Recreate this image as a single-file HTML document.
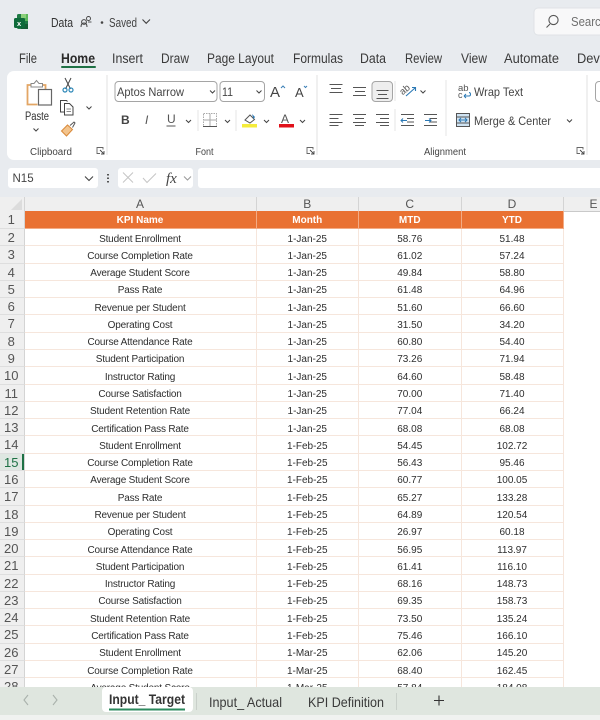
<!DOCTYPE html>
<html><head><meta charset="utf-8"><style>
html,body{margin:0;padding:0;width:600px;height:720px;overflow:hidden;background:#e8ebef;font-family:"Liberation Sans",sans-serif}
body{filter:blur(.3px)}
svg{position:absolute;left:0;top:0}
svg text{font-family:"Liberation Sans",sans-serif}
#grid{position:absolute;left:0;top:197px;width:600px;height:490px;background:#fff;overflow:hidden}
#head{position:absolute;left:0;top:0;width:600px;height:14px;background:#efefef;border-bottom:1px solid #c9c9c9}
#head div{position:absolute;top:0;height:14px;line-height:15px;font-size:12px;color:#555;text-align:center;border-right:1px solid #d4d4d4;box-sizing:content-box}
#rows{position:absolute;left:0;top:14px;width:564px}
.r{display:flex;height:17.29px;font-size:10px;color:#2e2e2e;line-height:17.5px;text-align:center}
.r>div{box-sizing:border-box;padding-top:1.5px;border-right:1px solid #f6e6dc;border-bottom:1px solid #f6e6dc;white-space:nowrap;overflow:hidden}
.r>div:nth-child(1){width:24.5px;background:#efefef;color:#555;font-size:13px;border-right:1px solid #d4d4d4;border-bottom:1px solid #dedede;padding-right:1px;padding-top:0}
.r>div:nth-child(2){width:232px;letter-spacing:-.18px}
.r>div:nth-child(3){width:102.5px}
.r>div:nth-child(4){width:102.5px}
.r>div:nth-child(5){width:102px}
.h>div:not(:first-child){background:#e97132;color:#fff;font-weight:bold;border-color:#f3ab84;letter-spacing:0;padding-top:1px}
.h{height:18px}
.s>div:nth-child(1){background:#dfe7e2;box-shadow:inset -2px 0 0 #1e7145;color:#1e7145}
</style></head><body>
<svg width="600" height="197" viewBox="0 0 600 197" fill="none" font-size="12">
<!-- excel logo -->
<rect x="17" y="14" width="11" height="15" rx="1.5" fill="#1f7a45"/>
<rect x="21" y="14" width="7" height="7" fill="#5cb85c"/>
<rect x="21" y="14" width="5" height="4" fill="#8bd07a"/>
<rect x="21" y="24" width="7" height="5" fill="#155c34"/>
<rect x="14" y="18" width="11" height="10" rx="1.5" fill="#0e6a3a"/>
<text x="17" y="26" font-size="7.5" font-weight="bold" fill="#fff">x</text>
<text x="51" y="27" font-size="12.500" fill="#333" textLength="22" lengthAdjust="spacingAndGlyphs">Data</text>
<circle cx="84" cy="22" r="2.4" stroke="#444"/><path d="M81 27c0-3 1-4 3-4s3 1 3 4" stroke="#444"/>
<circle cx="88.5" cy="18.5" r="2" stroke="#444" stroke-width=".9"/><path d="M88 22h3.5" stroke="#444" stroke-width=".9"/>
<circle cx="102" cy="22.500" r="1.300" fill="#444"/>
<text x="109" y="27" font-size="12.500" fill="#444" textLength="28" lengthAdjust="spacingAndGlyphs">Saved</text>
<path d="M142.500 19.500l3.700 3.800 3.800-3.800" stroke="#444" stroke-width="1.100"/>
<!-- search -->
<rect x="534" y="8" width="80" height="27" rx="4" fill="#f8f8f9" stroke="#dfe2e6"/>
<circle cx="553.500" cy="20" r="4.600" stroke="#555" stroke-width="1.100"/><path d="M550 24l-3.500 3.500" stroke="#555" stroke-width="1.100"/>
<text x="571" y="26" font-size="12.500" fill="#6f6f6f" textLength="36" lengthAdjust="spacingAndGlyphs">Search</text>
<!-- tabs -->
<g font-size="13.500" fill="#3a3a3a">
<text x="19" y="63" textLength="18" lengthAdjust="spacingAndGlyphs">File</text>
<text x="61" y="63" font-weight="bold" fill="#2a2a2a" textLength="34" lengthAdjust="spacingAndGlyphs">Home</text>
<text x="112" y="63" textLength="31" lengthAdjust="spacingAndGlyphs">Insert</text>
<text x="161" y="63" textLength="28" lengthAdjust="spacingAndGlyphs">Draw</text>
<text x="207" y="63" textLength="67" lengthAdjust="spacingAndGlyphs">Page Layout</text>
<text x="293" y="63" textLength="50" lengthAdjust="spacingAndGlyphs">Formulas</text>
<text x="360" y="63" textLength="26" lengthAdjust="spacingAndGlyphs">Data</text>
<text x="405" y="63" textLength="37" lengthAdjust="spacingAndGlyphs">Review</text>
<text x="461" y="63" textLength="26" lengthAdjust="spacingAndGlyphs">View</text>
<text x="504" y="63" textLength="55" lengthAdjust="spacingAndGlyphs">Automate</text>
<text x="577" y="63" textLength="30" lengthAdjust="spacingAndGlyphs">Deve</text>
</g>
<rect x="61" y="66" width="35" height="2" rx="1" fill="#1e7145"/>
<!-- ribbon -->
<rect x="7" y="71" width="620" height="89" rx="7" fill="#fff"/>
<path d="M107 75v80M317 75v80M587 75v80" stroke="#e1e1e1"/>
<!-- paste -->
<path d="M32 85h-4.500v19.500h10" stroke="#e3a665" stroke-width="1.800"/><path d="M41 85h4.500v4" stroke="#e3a665" stroke-width="1.800"/>
<path d="M31 83.500h3l2.500-3 2.500 3h3.500v3.500h-11.500z" stroke="#888" fill="#fff"/>
<rect x="38.500" y="89.500" width="13" height="15.500" fill="#fff" stroke="#666" stroke-width="1.200"/>
<text x="25" y="120" font-size="11.500" fill="#333" textLength="24" lengthAdjust="spacingAndGlyphs">Paste</text>
<path d="M33.500 128.500l2.500 2.500 2.500-2.500" stroke="#444"/>
<!-- scissors -->
<path d="M65 78l5.500 11M71 78l-5.500 11" stroke="#444"/><circle cx="65" cy="90" r="2" stroke="#2e88b8" stroke-width="1.200"/><circle cx="71" cy="90" r="2" stroke="#2e88b8" stroke-width="1.200"/>
<!-- copy -->
<path d="M64 112h-3.500v-11.500h6l1 1" stroke="#444"/><path d="M64.500 103.500h5l3.500 3.500v8h-8.500z" stroke="#444" fill="#fff"/><path d="M66.500 109h4.500M66.500 111.500h4.500" stroke="#666" stroke-width=".8"/>
<path d="M86.500 106.500l2.500 2.500 2.500-2.500" stroke="#444"/>
<!-- brush -->
<path d="M61.500 131l6-6 5 4.500-6 6.500z" fill="#f3c48d" stroke="#d98a3a"/><path d="M70 125.500l4-3.500 1 1-2.500 4.500" stroke="#555" fill="#fff"/>
<text x="30" y="155" font-size="10" fill="#444" textLength="42" lengthAdjust="spacingAndGlyphs">Clipboard</text>
<path d="M97 148.500v-1h6v2M97 147.500v6h3" stroke="#666" stroke-width=".9"/><path d="M100 150l4 4M104 151v3h-3" stroke="#444" stroke-width=".9"/>
<text x="195.500" y="155" font-size="10" fill="#444" textLength="18" lengthAdjust="spacingAndGlyphs">Font</text>
<path d="M307 148.500v-1h6v2M307 147.500v6h3" stroke="#666" stroke-width=".9"/><path d="M310 150l4 4M314 151v3h-3" stroke="#444" stroke-width=".9"/>
<text x="424" y="155" font-size="10" fill="#444" textLength="42" lengthAdjust="spacingAndGlyphs">Alignment</text>
<path d="M577 148.500v-1h6v2M577 147.500v6h3" stroke="#666" stroke-width=".9"/><path d="M580 150l4 4M584 151v3h-3" stroke="#444" stroke-width=".9"/>
<!-- font boxes -->
<rect x="115" y="81.500" width="102" height="20" rx="3.500" fill="#fff" stroke="#a5a5a5"/>
<rect x="220" y="81.500" width="44.500" height="20" rx="3.500" fill="#fff" stroke="#a5a5a5"/>
<text x="117" y="96" font-size="12" fill="#444" textLength="67" lengthAdjust="spacingAndGlyphs">Aptos Narrow</text>
<text x="222" y="96" font-size="12" fill="#444" textLength="11" lengthAdjust="spacingAndGlyphs">11</text>
<path d="M210 90.500l2.500 2.500 2.500-2.500M256.500 90.500l2.500 2.500 2.500-2.500" stroke="#444"/>
<text x="270" y="97" font-size="15" fill="#444">A</text><path d="M281 88l2-2 2 2" stroke="#3b7fb6"/>
<text x="295" y="97" font-size="13" fill="#444">A</text><path d="M304 86l1.500 1.500 1.500-1.500" stroke="#3b7fb6"/>
<!-- B I U -->
<text x="121" y="124" font-size="12" font-weight="bold" fill="#444">B</text>
<text x="145" y="124" font-size="12" font-style="italic" fill="#555">I</text>
<text x="167" y="123" font-size="12" fill="#555">U</text><path d="M166.500 126h9" stroke="#555"/>
<path d="M186 120l2.500 2.500 2.500-2.500" stroke="#444"/>
<path d="M198 110v21M236 110v21" stroke="#e4e4e4"/>
<rect x="203.500" y="113.500" width="13" height="13" stroke="#aaa" stroke-dasharray="1.500 1"/><path d="M203.500 120h13M210 113.500v13" stroke="#aaa"/><path d="M203 126.500h14" stroke="#555"/>
<path d="M225 120l2.500 2.500 2.500-2.500" stroke="#444"/>
<path d="M245 120l5-5 4.500 4.500-4.500 3.500z" stroke="#555" fill="#fff"/><path d="M252 114l3 3-1.500 2z" fill="#2b79b5"/>
<rect x="242" y="124" width="15" height="3.500" fill="#f5ec3b"/>
<path d="M264 120l2.500 2.500 2.500-2.500" stroke="#444"/>
<text x="281" y="123" font-size="12" fill="#555">A</text>
<rect x="279" y="124" width="15" height="3.500" fill="#e0111a"/>
<path d="M300 120l2.500 2.500 2.500-2.500" stroke="#444"/>
<!-- alignment -->
<g stroke="#555" stroke-width="1.100">
<path d="M329.500 84.500h13M331 88.500h10M329.500 92.500h13"/>
<path d="M353 87.500h13M355 91.500h10M353 95.500h13"/>
<path d="M329.500 114.500h13M329.500 118.500h9M329.500 122.500h13M329.500 125.500h9"/>
<path d="M353 114.500h13M355 118.500h9M353 122.500h13M355 125.500h9"/>
<path d="M376 114.500h13M380 118.500h9M376 122.500h13M380 125.500h9"/>
<path d="M401 114.500h13M407 118.500h7M407 122h7M401 125.500h13"/>
<path d="M424 114.500h13M430 118.500h7M430 122h7M424 125.500h13"/>
</g>
<rect x="372" y="81.500" width="20.500" height="20" rx="3.500" fill="#eeeeee" stroke="#a5a5a5"/>
<path d="M376.500 90.500h12M378 94.500h9M376.500 98.500h12" stroke="#555" stroke-width="1.100"/>
<path d="M395 81v20M395 109v22M446 80v56" stroke="#e4e4e4"/>
<path d="M401 120.500h6M403 118.500l-2 2 2 2M431 120.500h-6M429 118.500l2 2-2 2" stroke="#2b79b5"/>
<text x="401" y="93" font-size="9.500" fill="#555" transform="rotate(-40 405 92)">ab</text>
<path d="M406 96l9-8M412 87.500h3.500v3.500" stroke="#2b79b5" stroke-width="1.100"/>
<path d="M420.500 90.500l2.500 2.500 2.500-2.500" stroke="#444"/>
<!-- wrap/merge -->
<text x="458" y="91" font-size="9.500" fill="#555">ab</text><text x="458" y="98" font-size="9" fill="#555">c</text>
<path d="M464 96h5c2 0 2-3.500 0-3.500M464 96l2-2M464 96l2 2" stroke="#2b79b5"/>
<text x="474" y="96" font-size="12" fill="#444" textLength="49" lengthAdjust="spacingAndGlyphs">Wrap Text</text>
<rect x="456.500" y="113.500" width="13" height="13" fill="#cfe3f2" stroke="#555"/>
<path d="M456.500 117h13M456.500 123h13" stroke="#555"/><path d="M459 120h8M461 118l-2 2 2 2M465 118l2 2-2 2" stroke="#2b79b5" fill="none"/>
<text x="474" y="125" font-size="12" fill="#444" textLength="77" lengthAdjust="spacingAndGlyphs">Merge &amp; Center</text>
<path d="M567 119.500l2.500 2.500 2.500-2.500" stroke="#444"/>
<rect x="595.500" y="81.500" width="20" height="20" rx="3.500" fill="#fff" stroke="#a5a5a5"/>
<!-- formula bar -->
<rect x="8" y="168" width="90" height="20" rx="3" fill="#fff"/>
<text x="12.500" y="182" font-size="11.500" fill="#444">N15</text>
<path d="M85 176.500l4 4 4-4" stroke="#444" stroke-width="1.100"/>
<path d="M108 174v1.500M108 177.500v1.500M108 181v1.500" stroke="#444" stroke-width="1.800"/>
<rect x="118" y="168" width="75" height="20" rx="3" fill="#fff"/>
<path d="M123 172.500l10 10M133 172.500l-10 10" stroke="#c5c5c5"/>
<path d="M143 178l4 4.500 9-9" stroke="#c5c5c5"/>
<text x="166" y="183" font-size="15" font-style="italic" fill="#444" style="font-family:'Liberation Serif',serif">fx</text>
<path d="M184 176.500l3.500 3.500 3.500-3.500" stroke="#999"/>
<rect x="198" y="168" width="410" height="20" rx="3" fill="#fff"/>
</svg>
<div id="grid">
<div id="head">
<div style="left:0;width:23.5px"><svg width="24" height="14" style="position:absolute"><path d="M22 2v11H11z" fill="#dcdcdc"/></svg></div>
<div style="left:24.500px;width:231px">A</div>
<div style="left:256.500px;width:101.500px">B</div>
<div style="left:359px;width:101.500px">C</div>
<div style="left:461.500px;width:101px">D</div>
<div style="left:563.500px;width:60px;border:0">E</div>
</div>
<div id="rows">
<div class="r h"><div>1</div><div>KPI Name</div><div>Month</div><div>MTD</div><div>YTD</div></div>
<div class="r"><div>2</div><div>Student Enrollment</div><div>1-Jan-25</div><div>58.76</div><div>51.48</div></div>
<div class="r"><div>3</div><div>Course Completion Rate</div><div>1-Jan-25</div><div>61.02</div><div>57.24</div></div>
<div class="r"><div>4</div><div>Average Student Score</div><div>1-Jan-25</div><div>49.84</div><div>58.80</div></div>
<div class="r"><div>5</div><div>Pass Rate</div><div>1-Jan-25</div><div>61.48</div><div>64.96</div></div>
<div class="r"><div>6</div><div>Revenue per Student</div><div>1-Jan-25</div><div>51.60</div><div>66.60</div></div>
<div class="r"><div>7</div><div>Operating Cost</div><div>1-Jan-25</div><div>31.50</div><div>34.20</div></div>
<div class="r"><div>8</div><div>Course Attendance Rate</div><div>1-Jan-25</div><div>60.80</div><div>54.40</div></div>
<div class="r"><div>9</div><div>Student Participation</div><div>1-Jan-25</div><div>73.26</div><div>71.94</div></div>
<div class="r"><div>10</div><div>Instructor Rating</div><div>1-Jan-25</div><div>64.60</div><div>58.48</div></div>
<div class="r"><div>11</div><div>Course Satisfaction</div><div>1-Jan-25</div><div>70.00</div><div>71.40</div></div>
<div class="r"><div>12</div><div>Student Retention Rate</div><div>1-Jan-25</div><div>77.04</div><div>66.24</div></div>
<div class="r"><div>13</div><div>Certification Pass Rate</div><div>1-Jan-25</div><div>68.08</div><div>68.08</div></div>
<div class="r"><div>14</div><div>Student Enrollment</div><div>1-Feb-25</div><div>54.45</div><div>102.72</div></div>
<div class="r s"><div>15</div><div>Course Completion Rate</div><div>1-Feb-25</div><div>56.43</div><div>95.46</div></div>
<div class="r"><div>16</div><div>Average Student Score</div><div>1-Feb-25</div><div>60.77</div><div>100.05</div></div>
<div class="r"><div>17</div><div>Pass Rate</div><div>1-Feb-25</div><div>65.27</div><div>133.28</div></div>
<div class="r"><div>18</div><div>Revenue per Student</div><div>1-Feb-25</div><div>64.89</div><div>120.54</div></div>
<div class="r"><div>19</div><div>Operating Cost</div><div>1-Feb-25</div><div>26.97</div><div>60.18</div></div>
<div class="r"><div>20</div><div>Course Attendance Rate</div><div>1-Feb-25</div><div>56.95</div><div>113.97</div></div>
<div class="r"><div>21</div><div>Student Participation</div><div>1-Feb-25</div><div>61.41</div><div>116.10</div></div>
<div class="r"><div>22</div><div>Instructor Rating</div><div>1-Feb-25</div><div>68.16</div><div>148.73</div></div>
<div class="r"><div>23</div><div>Course Satisfaction</div><div>1-Feb-25</div><div>69.35</div><div>158.73</div></div>
<div class="r"><div>24</div><div>Student Retention Rate</div><div>1-Feb-25</div><div>73.50</div><div>135.24</div></div>
<div class="r"><div>25</div><div>Certification Pass Rate</div><div>1-Feb-25</div><div>75.46</div><div>166.10</div></div>
<div class="r"><div>26</div><div>Student Enrollment</div><div>1-Mar-25</div><div>62.06</div><div>145.20</div></div>
<div class="r"><div>27</div><div>Course Completion Rate</div><div>1-Mar-25</div><div>68.40</div><div>162.45</div></div>
<div class="r"><div>28</div><div>Average Student Score</div><div>1-Mar-25</div><div>57.84</div><div>184.08</div></div>
</div>
</div>
<svg width="600" height="33" viewBox="0 687 600 33" style="top:687px" fill="none">
<rect x="0" y="687" width="600" height="28" fill="#dfe6df"/>
<rect x="0" y="715" width="600" height="5" fill="#f0f2f0"/>
<path d="M28 695l-4 5 4 5M53 695l4 5-4 5" stroke="#aab2ac" stroke-width="1.100"/>
<rect x="102" y="687" width="91" height="25" rx="4" fill="#fff"/>
<text x="109" y="704" font-size="14" font-weight="bold" fill="#333" textLength="76" lengthAdjust="spacingAndGlyphs">Input_ Target</text>
<rect x="109" y="708.500" width="76" height="2" fill="#2b8a5e"/>
<path d="M196.500 693v17M396.500 693v17" stroke="#c9d0ca"/>
<text x="209" y="707" font-size="14" fill="#3a3a3a" textLength="73" lengthAdjust="spacingAndGlyphs">Input_ Actual</text>
<text x="308" y="707" font-size="14" fill="#3a3a3a" textLength="76" lengthAdjust="spacingAndGlyphs">KPI Definition</text>
<path d="M434 700.500h10M439 695.500v10" stroke="#333" stroke-width="1.100"/>
</svg>
</body></html>
